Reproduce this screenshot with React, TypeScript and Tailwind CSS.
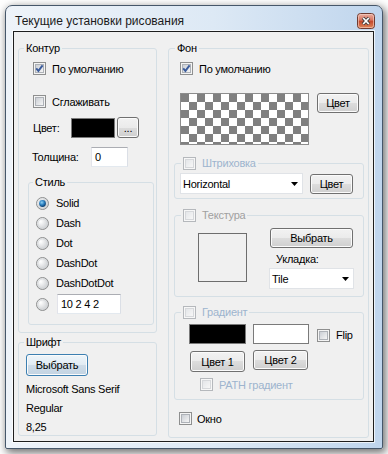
import React from "react";

type CheckProps = { checked?: boolean; disabled?: boolean };

function Check({ checked = false, disabled = false }: CheckProps) {
  return (
    <span
      className={`relative flex w-[13px] h-[13px] shrink-0 border p-[1px] ${
        disabled ? "border-[#b5b8bc] bg-[#f7f7f7]" : "border-[#8e8f8f] bg-[#f4f4f4]"
      }`}
    >
      <span
        className={`flex w-full h-full border ${
          disabled
            ? "border-[#d6d8db] bg-[linear-gradient(135deg,#e4e6e9,#f7f7f7)]"
            : "border-[#aeb2b8] bg-[linear-gradient(135deg,#cbcfd5,#f5f5f5)]"
        }`}
      />
      {checked && (
        <svg className="absolute left-0 top-0" width="11" height="11" viewBox="0 0 11 11">
          <path d="M2.2 5.4 L4.4 7.9 L8.6 2.4" fill="none" stroke="#3b5c9c" strokeWidth="1.9" />
        </svg>
      )}
    </span>
  );
}

function Radio({ checked = false }: { checked?: boolean }) {
  return (
    <svg width="13" height="13" viewBox="0 0 13 13" className="shrink-0">
      <defs>
        <radialGradient id="rfill" cx="0.35" cy="0.35" r="0.7">
          <stop offset="0" stopColor="#ffffff" />
          <stop offset="1" stopColor="#c9cccf" />
        </radialGradient>
        <radialGradient id="rdot" cx="0.4" cy="0.35" r="0.65">
          <stop offset="0" stopColor="#8fd0f3" />
          <stop offset="0.55" stopColor="#2a7fc0" />
          <stop offset="1" stopColor="#0d3e6e" />
        </radialGradient>
      </defs>
      <circle cx="6.5" cy="6.5" r="6" fill="url(#rfill)" stroke="#8e8f8f" />
      <circle cx="6.5" cy="6.5" r="4.6" fill="none" stroke="#d6d8da" strokeWidth="0.8" />
      {checked && <circle cx="6.5" cy="6.5" r="3.4" fill="url(#rdot)" />}
    </svg>
  );
}

function Btn({
  children,
  className = "",
  focused = false,
}: {
  children: React.ReactNode;
  className?: string;
  focused?: boolean;
}) {
  return (
    <button
      className={`flex shrink-0 items-center justify-center rounded-[3px] border text-[11px] leading-[14px] tracking-[-0.25px] text-black shadow-[inset_0_0_0_1px_#fbfbfb] ${
        focused
          ? "border-[#3c7fb1] bg-[linear-gradient(#eef5fa,#e1ebf3_50%,#cfdce8_50%,#c2d3e2)]"
          : "border-[#707070] bg-[linear-gradient(#f2f2f2,#ebebeb_50%,#dddddd_50%,#cfcfcf)]"
      } ${className}`}
    >
      {children}
    </button>
  );
}

function Combo({ value, className = "" }: { value: string; className?: string }) {
  return (
    <div
      className={`flex shrink-0 items-center justify-between border border-[#e0e3e7] bg-white pl-[2px] pr-[4px] ${className}`}
    >
      <span>{value}</span>
      <svg width="7" height="4" viewBox="0 0 7 4">
        <path d="M0 0 H7 L3.5 4 Z" fill="#000" />
      </svg>
    </div>
  );
}

function TextBox({ value, className = "" }: { value: string; className?: string }) {
  return (
    <div
      className={`flex shrink-0 items-center border border-[#abadb3] border-b-[#e3e9ef] border-l-[#e2e3ea] border-r-[#dbdfe6] bg-white pl-[3px] ${className}`}
    >
      {value}
    </div>
  );
}

function Group({
  title,
  className = "",
  titleClass = "",
  children,
}: {
  title: React.ReactNode;
  className?: string;
  titleClass?: string;
  children?: React.ReactNode;
}) {
  return (
    <div className={`flex shrink-0 flex-col rounded-[3px] border border-[#d5dfe5] ${className}`}>
      <div className={`-mt-[8px] flex h-[14px] w-fit items-center bg-[#f0f0f0] px-[2px] ${titleClass}`}>
        {title}
      </div>
      {children}
    </div>
  );
}

function Checker() {
  const cells: React.ReactNode[] = [];
  for (let r = 0; r < 7; r++) {
    for (let c = 0; c < 16; c++) {
      if ((r + c) % 2 === 0) {
        cells.push(<rect key={`${r}-${c}`} x={c * 8} y={r * 8} width="8" height="8" fill="#808080" />);
      }
    }
  }
  return (
    <div className="h-[52px] w-[129px] shrink-0 border border-[#8c8c8c] bg-white">
      <svg width="127" height="50" viewBox="0 0 127 50">
        {cells}
      </svg>
    </div>
  );
}

function CloseBtn() {
  return (
    <svg width="18" height="16" viewBox="0 0 18 16">
      <defs>
        <linearGradient id="cg" x1="0" y1="0" x2="0" y2="1">
          <stop offset="0" stopColor="#eab0a2" />
          <stop offset="0.45" stopColor="#d77560" />
          <stop offset="0.5" stopColor="#c3452b" />
          <stop offset="1" stopColor="#e08a5c" />
        </linearGradient>
      </defs>
      <rect x="0.5" y="0.5" width="17" height="15" rx="3" fill="url(#cg)" stroke="#6e3b31" />
      <rect x="1.5" y="1.5" width="15" height="13" rx="2" fill="none" stroke="#f6d3c8" strokeOpacity="0.6" />
      <path d="M6 4.8 L12 11.2 M12 4.8 L6 11.2" stroke="#3d3d3d" strokeWidth="3.4" />
      <path d="M6.2 5 L11.8 11 M11.8 5 L6.2 11" stroke="#ffffff" strokeWidth="1.7" />
    </svg>
  );
}

export default function App() {
  return (
    <div className="h-[454px] w-[388px] bg-white pl-[5px] pt-[5px] font-['Liberation_Sans',Arial,sans-serif] text-[11px] leading-[14px] tracking-[-0.25px] text-black">
      <div className="flex h-[444px] w-[378px] flex-col rounded-b-[2px] rounded-t-[7px] border border-[#46576a] bg-[linear-gradient(90deg,#eef3f9,#dde9f5_55%,#bfd5ed)] shadow-[2px_3px_9px_1px_rgba(0,0,0,0.55)]">
        <div className="flex h-[25px] items-center pl-[9px] pr-[7px] pt-[4px]">
          <span className="flex-1 text-[12px] tracking-normal text-[#1b1b1b]">Текущие установки рисования</span>
          <CloseBtn />
        </div>
        <div className="ml-[7px] flex h-[411px] w-[361px] border border-[#1e1e1e] bg-[#f0f0f0] pl-[4px] pt-[16px] shadow-[0_0_0_1px_rgba(255,255,255,0.7)]">
          {/* Left column */}
          <div className="flex w-[139px] flex-col">
            <Group title="Контур" className="h-[285px] w-[139px]" titleClass="ml-[5px]">
              <div className="ml-[14px] mt-[7px] flex h-[13px] items-center">
                <Check checked />
                <span className="ml-[6px]">По умолчанию</span>
              </div>
              <div className="ml-[14px] mt-[20px] flex h-[13px] items-center">
                <Check />
                <span className="ml-[6px]">Сглаживать</span>
              </div>
              <div className="ml-[14px] mt-[9px] flex h-[21px] items-center">
                <span className="w-[38px]">Цвет:</span>
                <div className="h-[20px] w-[44px] border border-[#7a7a7a] bg-black" />
                <Btn className="ml-[2px] h-[21px] w-[22px]">...</Btn>
              </div>
              <div className="ml-[13px] mt-[9px] flex h-[20px] items-center">
                <span className="w-[59px]">Толщина:</span>
                <TextBox value="0" className="h-[20px] w-[37px]" />
              </div>
              <Group title="Стиль" className="ml-[9px] mt-[15px] h-[143px] w-[126px]" titleClass="ml-[4px]">
                <div className="mt-[4px] flex flex-col pl-[7px]">
                  {["Solid", "Dash", "Dot", "DashDot", "DashDotDot"].map((s, i) => (
                    <div key={s} className="flex h-[20px] items-center">
                      <Radio checked={i === 0} />
                      <span className="ml-[7px]">{s}</span>
                    </div>
                  ))}
                  <div className="mt-[1px] flex h-[20px] items-center">
                    <Radio />
                    <TextBox value="10 2 4 2" className="ml-[8px] h-[20px] w-[64px]" />
                  </div>
                </div>
              </Group>
            </Group>
            <Group title="Шрифт" className="mt-[9px] h-[94px] w-[139px]" titleClass="ml-[5px]">
              <Btn focused className="ml-[7px] mt-[5px] h-[22px] w-[62px]">
                Выбрать
              </Btn>
              <div className="ml-[7px] mt-[3px] flex flex-col">
                <div className="flex h-[19px] items-center">Microsoft Sans Serif</div>
                <div className="flex h-[19px] items-center">Regular</div>
                <div className="flex h-[19px] items-center">8,25</div>
              </div>
            </Group>
          </div>

          {/* Right column */}
          <Group title="Фон" className="ml-[11px] h-[390px] w-[201px]" titleClass="ml-[6px]">
            <div className="ml-[11px] mt-[7px] flex h-[13px] items-center">
              <Check checked />
              <span className="ml-[6px]">По умолчанию</span>
            </div>
            <div className="ml-[11px] mt-[18px] flex items-start">
              <Checker />
              <Btn className="ml-[8px] h-[20px] w-[42px]">Цвет</Btn>
            </div>

            <Group
              title={
                <>
                  <Check disabled />
                  <span className="ml-[6px] text-[#9db4ce]">Штриховка</span>
                </>
              }
              className="ml-[5px] mt-[18px] h-[36px] w-[190px]"
              titleClass="ml-[6px]"
            >
              <div className="ml-[5px] mt-[3px] flex items-start">
                <Combo value="Horizontal" className="h-[21px] w-[123px]" />
                <Btn className="ml-[7px] mt-[1px] h-[20px] w-[43px]">Цвет</Btn>
              </div>
            </Group>

            <Group
              title={
                <>
                  <Check disabled />
                  <span className="ml-[6px] text-[#a0a0a0]">Текстура</span>
                </>
              }
              className="ml-[5px] mt-[16px] h-[82px] w-[190px]"
              titleClass="ml-[6px]"
            >
              <div className="mt-[6px] flex items-start">
                <div className="ml-[23px] mt-[5px] h-[49px] w-[49px] shrink-0 border border-[#6d6d6d]" />
                <div className="ml-[23px] flex flex-col">
                  <Btn className="h-[20px] w-[83px]">Выбрать</Btn>
                  <div className="ml-[6px] mt-[4px] flex h-[14px] items-center">Укладка:</div>
                  <Combo value="Tile" className="-ml-[1px] mt-[2px] h-[21px] w-[85px]" />
                </div>
              </div>
            </Group>

            <Group
              title={
                <>
                  <Check disabled />
                  <span className="ml-[6px] text-[#9db4ce]">Градиент</span>
                </>
              }
              className="ml-[5px] mt-[15px] h-[88px] w-[190px]"
              titleClass="ml-[6px]"
            >
              <div className="ml-[14px] mt-[5px] flex h-[20px] items-center">
                <div className="h-[20px] w-[57px] shrink-0 border border-[#7a7a7a] bg-black" />
                <div className="ml-[7px] h-[20px] w-[56px] shrink-0 border border-[#7a7a7a] bg-white" />
                <div className="ml-[8px] mt-[2px]">
                  <Check />
                </div>
                <span className="ml-[6px] mt-[2px]">Flip</span>
              </div>
              <div className="ml-[15px] mt-[7px] flex items-start">
                <Btn className="h-[21px] w-[55px]">Цвет 1</Btn>
                <Btn className="-mt-[1px] ml-[8px] h-[20px] w-[55px]">Цвет 2</Btn>
              </div>
              <div className="ml-[25px] mt-[6px] flex h-[13px] items-center">
                <Check disabled />
                <span className="ml-[6px] text-[#9db4ce]">PATH градиент</span>
              </div>
            </Group>

            <div className="ml-[10px] mt-[12px] flex h-[13px] items-center">
              <Check />
              <span className="ml-[5px]">Окно</span>
            </div>
          </Group>
        </div>
      </div>
    </div>
  );
}
